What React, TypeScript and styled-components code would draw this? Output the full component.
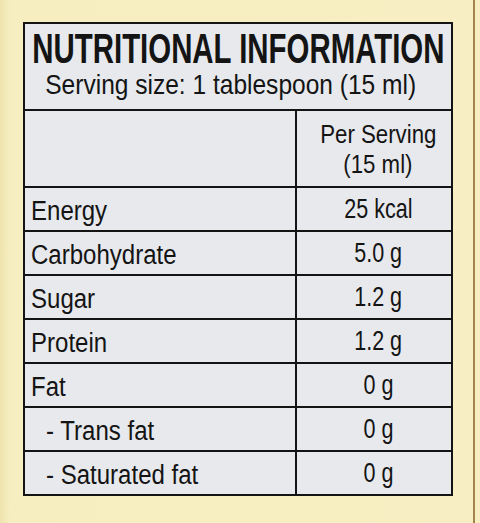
import styled, { createGlobalStyle } from 'styled-components'

const GlobalStyle = createGlobalStyle`
  html, body {
    margin: 0;
    padding: 0;
    background: #f6eec1;
  }
  body {
    font-family: "Liberation Sans", Arial, sans-serif;
    color: #141414;
  }
`

const Sheet = styled.div`
  width: 475px;
  height: 523px;
  box-sizing: border-box;
  padding: 22px 0 0 23px;
  background: linear-gradient(90deg, #efe4ad 0px, #f6eec1 10px, #f7efc3 100%);
  border-right: 2px solid #a5834c;
`

const Label = styled.div`
  width: 430px;
  box-sizing: border-box;
  border: 2px solid #141414;
  background: #e7e9ed;
`

// the print uses a condensed face, so squeeze Liberation Sans to fit
const Squeeze = styled.span<{ $x: number; $origin?: string }>`
  display: inline-block;
  white-space: nowrap;
  transform: scaleX(${p => p.$x});
  transform-origin: ${p => p.$origin ?? 'center'};
`

const Header = styled.div`
  height: 85px;
  display: flex;
  flex-direction: column;
  align-items: center;
  overflow: hidden;
  border-bottom: 2px solid #141414;
`

const Title = styled.h1`
  margin: 3px 0 0;
  font-size: 42px;
  line-height: 44px;
  font-weight: 700;
`

const Serving = styled.div`
  font-size: 28px;
  line-height: 30px;
  margin: -1px 15px 0 0;
`

const Table = styled.div`
  display: grid;
  grid-template-columns: 270px 1fr;
`

const Cell = styled.div<{ $head?: boolean; $value?: boolean; $last?: boolean; $indent?: boolean }>`
  box-sizing: border-box;
  height: ${p => (p.$head ? 77 : p.$last ? 42 : 44)}px;
  border-bottom: ${p => (p.$last ? 'none' : '2px solid #141414')};
  border-left: ${p => (p.$value ? '2px solid #141414' : 'none')};
  display: flex;
  flex-direction: column;
  justify-content: center;
  align-items: ${p => (p.$value ? 'center' : 'flex-start')};
  padding-left: ${p => (p.$value ? '8px' : p.$indent ? '21px' : '6px')};
  padding-top: ${p => (p.$value || p.$head ? 0 : 3)}px;
  font-size: ${p => (p.$head ? 25 : p.$value ? 28 : 27)}px;
  line-height: 30px;
  overflow: hidden;
`

const rows = [
  { name: 'Energy', value: '25 kcal' },
  { name: 'Carbohydrate', value: '5.0 g' },
  { name: 'Sugar', value: '1.2 g' },
  { name: 'Protein', value: '1.2 g' },
  { name: 'Fat', value: '0 g' },
  { name: '- Trans fat', value: '0 g', indent: true },
  { name: '- Saturated fat', value: '0 g', indent: true },
]

const App = () => {
  return (
    <Sheet>
      <GlobalStyle />
      <Label>
        <Header>
          <Title>
            <Squeeze $x={0.7}>NUTRITIONAL INFORMATION</Squeeze>
          </Title>
          <Serving>
            <Squeeze $x={0.876}>Serving size: 1 tablespoon (15 ml)</Squeeze>
          </Serving>
        </Header>
        <Table>
          <Cell $head />
          <Cell $head $value>
            <Squeeze $x={0.89}>Per Serving</Squeeze>
            <Squeeze $x={0.89}>(15 ml)</Squeeze>
          </Cell>
          {rows.map((r, i) => [
            <Cell key={r.name} $indent={r.indent} $last={i === rows.length - 1}>
              <Squeeze $x={0.89} $origin="left">
                {r.name}
              </Squeeze>
            </Cell>,
            <Cell key={r.name + '-v'} $value $last={i === rows.length - 1}>
              <Squeeze $x={0.77}>{r.value}</Squeeze>
            </Cell>,
          ])}
        </Table>
      </Label>
    </Sheet>
  )
}

export default App
